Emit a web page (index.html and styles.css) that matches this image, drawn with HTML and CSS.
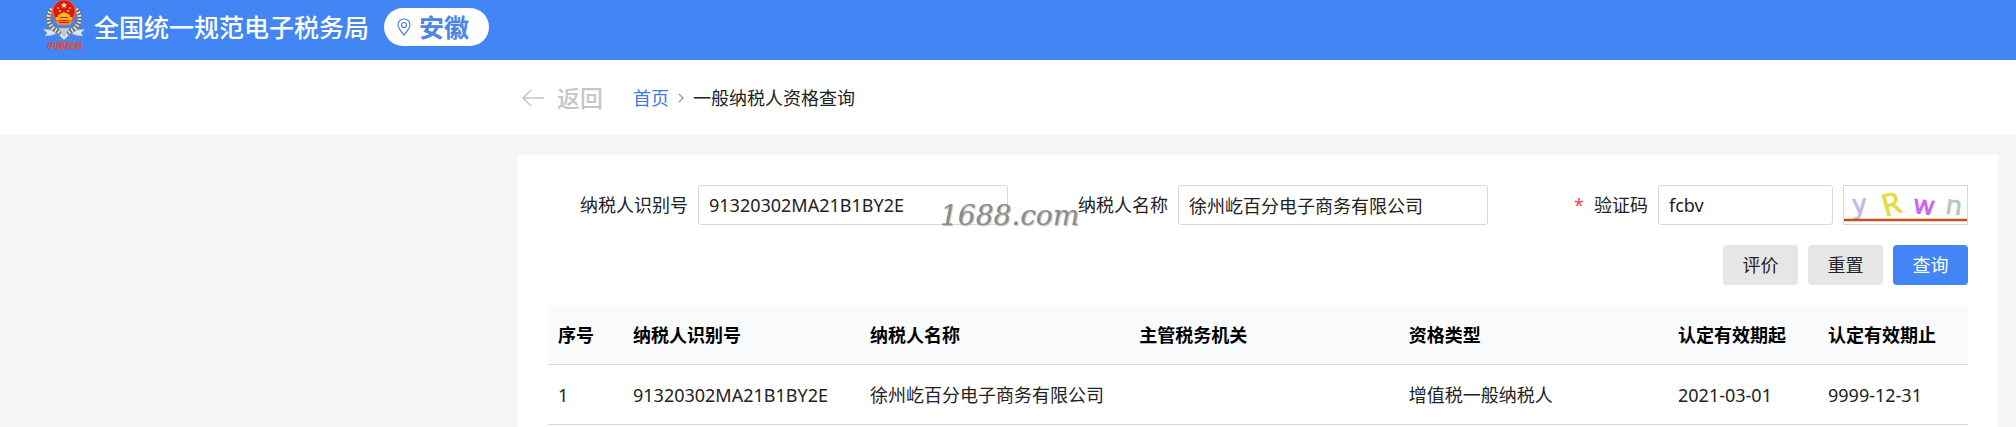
FILE: index.html
```html
<!DOCTYPE html>
<html lang="zh-CN">
<head>
<meta charset="utf-8">
<meta name="viewport" content="width=device-width, initial-scale=1">
<title>一般纳税人资格查询</title>
<link rel="stylesheet" href="styles.css">
</head>
<body>
<header class="topbar">
  <svg class="emblem" viewBox="0 0 44 54" role="img" aria-label="中国税务">
    <path d="M1 29 Q8 31 13 28 L22 34 L31 28 Q36 31 43 29 L39 33 L41 36 Q33 36 29 33 L22 40 L15 33 Q11 36 3 36 L5 33Z" fill="#dfe2e8" stroke="#9aa3b5" stroke-width=".6"/>
    <path d="M10 9 Q2 20 12 29 L19 33 M34 9 Q42 20 32 29 L25 33" fill="none" stroke="#6e7079" stroke-width="5"/>
    <path d="M10 9 Q2 20 12 29 L19 33 M34 9 Q42 20 32 29 L25 33" fill="none" stroke="#e6e3dc" stroke-width="4" stroke-dasharray="1.6 1.8"/>
    <path d="M16 28 L22 36 L28 28Z" fill="#c9ccd4" stroke="#8b909c" stroke-width=".6"/>
    <circle cx="22" cy="12" r="12" fill="#ef5a1c"/>
    <circle cx="22" cy="11" r="10.5" fill="#dd1712"/>
    <path d="M22 2 l.9 2.2 2.3.1 -1.8 1.5 .6 2.3 -2-1.3 -2 1.3 .6-2.3 -1.8-1.5 2.3-.1Z" fill="#fff0b0"/>
    <g fill="#ffd84a"><circle cx="16" cy="8" r="1"/><circle cx="28" cy="8" r="1"/><circle cx="18" cy="11" r="1"/><circle cx="26" cy="11" r="1"/></g>
    <path d="M16 15 L22 12 L28 15 V17 H30 V20 H14 V17 H16Z" fill="#f9b61f"/>
    <path d="M13 21 H31 L28 25 H16Z" fill="#f58a1b"/>
    <path d="M18 17.500 H26 M17 22.500 H27" stroke="#c91c12" stroke-width="1"/>
    <text class="emblem-name" x="4" y="49">中国税务</text>
  </svg>
  <h1 class="site-title">全国统一规范电子税务局</h1>
  <button class="region" type="button">
    <svg class="pin" viewBox="0 0 14 18" aria-hidden="true"><path d="M7 1 C3.500 1 1 3.500 1 7 C1 10 4 13.500 7 17 C10 13.500 13 10 13 7 C13 3.500 10.500 1 7 1Z"/><circle cx="7" cy="7" r="2.500"/></svg>
    <span>安徽</span>
  </button>
</header>

<nav class="crumbs" aria-label="面包屑">
  <a class="back" href="#">
    <svg class="arrow" viewBox="0 0 24 20" aria-hidden="true"><path d="M10 2 L2 10 L10 18 M2 10 H23"/></svg>
    <span>返回</span>
  </a>
  <a class="home" href="#">首页</a>
  <svg class="chevron" viewBox="0 0 6 10" aria-hidden="true"><path d="M1 1 L5 5 L1 9"/></svg>
  <span class="current">一般纳税人资格查询</span>
</nav>

<main class="panel">
  <form class="query">
    <div class="field">
      <label for="taxid">纳税人识别号</label>
      <div class="control">
        <input id="taxid" type="text" value="91320302MA21B1BY2E">
        <span class="watermark">1688.com</span>
      </div>
    </div>
    <div class="field">
      <label for="name">纳税人名称</label>
      <div class="control"><input id="name" type="text" value="徐州屹百分电子商务有限公司"></div>
    </div>
    <div class="field">
      <label for="code"><span class="required">*</span>验证码</label>
      <div class="control">
        <input id="code" type="text" value="fcbv">
        <svg class="captcha" viewBox="0 0 123 38" role="img" aria-label="验证码图片">
          <text x="9" y="27" fill="#c9b5ee" stroke="#c9b5ee" transform="rotate(-4 16 20)">y</text>
          <text class="upper" x="38" y="29" fill="#e6dc3c" stroke="#e6dc3c" transform="rotate(-16 46 18)">R</text>
          <text x="70" y="28" fill="#c965ee" stroke="#c965ee" transform="rotate(6 80 20)">w</text>
          <text x="102" y="28" fill="#b4c8bc" stroke="#b4c8bc" transform="rotate(8 108 20)">n</text>
          <path d="M0 34 H123" stroke="#c0501c" stroke-width="2.500"/>
        </svg>
      </div>
    </div>
    <div class="actions">
      <button class="btn" type="button">评价</button>
      <button class="btn" type="reset">重置</button>
      <button class="btn primary" type="button">查询</button>
    </div>
  </form>

  <table class="results">
    <colgroup><col class="c-index"><col class="c-id"><col class="c-wide"><col class="c-wide"><col class="c-wide"><col class="c-date"><col class="c-date"></colgroup>
    <thead>
      <tr><th scope="col">序号</th><th scope="col">纳税人识别号</th><th scope="col">纳税人名称</th><th scope="col">主管税务机关</th><th scope="col">资格类型</th><th scope="col">认定有效期起</th><th scope="col">认定有效期止</th></tr>
    </thead>
    <tbody>
      <tr><td>1</td><td>91320302MA21B1BY2E</td><td>徐州屹百分电子商务有限公司</td><td></td><td>增值税一般纳税人</td><td>2021-03-01</td><td>9999-12-31</td></tr>
    </tbody>
  </table>
</main>
</body>
</html>
```
FILE: styles.css
```css
* {
  box-sizing: border-box;
}

body {
  display: flex;
  flex-direction: column;
  min-height: 100vh;
  margin: 0;
  background: #f5f6f8;
  color: #222;
  font: 18px/24px "Noto Sans", "Noto Sans CJK SC", sans-serif;
}

button,
input {
  font: inherit;
  color: inherit;
}

a {
  text-decoration: none;
}

.topbar {
  display: flex;
  align-items: center;
  height: 60px;
  padding: 0 42px 6px;
  background: #4285f4;
  color: #fff;
}

.emblem {
  width: 44px;
  height: 54px;
  margin-right: 8px;
}

.emblem-name {
  fill: #e8472c;
  font: italic bold 9px "Noto Sans CJK SC", sans-serif;
}

.site-title {
  margin: 0;
  font-size: 25px;
  font-weight: 500;
}

.region {
  display: flex;
  align-items: center;
  gap: 8px;
  height: 38px;
  margin-left: 15px;
  padding: 0 20px 0 13px;
  border: 0;
  border-radius: 19px;
  background: #fff;
  color: #4a86e8;
  font-size: 25px;
  font-weight: 700;
}

.pin {
  width: 14px;
  height: 18px;
  fill: none;
  stroke: #4a7fd8;
  stroke-width: 1.2;
}

.crumbs {
  display: flex;
  align-items: center;
  height: 75px;
  padding-left: 521px;
  background: #fff;
}

.back {
  display: flex;
  align-items: center;
  gap: 12px;
  margin-right: 30px;
  color: #c6c6c6;
  font-size: 23px;
  font-weight: 500;
}

.arrow {
  width: 24px;
  height: 20px;
  fill: none;
  stroke: #c6c6c6;
  stroke-width: 1.5;
}

.home {
  color: #3f78e0;
}

.chevron {
  width: 6px;
  height: 10px;
  margin: 0 9px;
  fill: none;
  stroke: #999;
  stroke-width: 1.3;
}

.panel {
  flex: 1;
  margin: 20px 18px 0 518px;
  padding: 30px 30px 0;
  background: #fff;
}

.query {
  display: grid;
  grid-template-columns: repeat(3, 1fr);
  gap: 20px;
  margin-bottom: 20px;
}

.field {
  display: flex;
  align-items: center;
  justify-content: flex-end;
  gap: 10px;
}

.required {
  margin-right: 10px;
  color: #e04850;
}

.control {
  position: relative;
  display: flex;
  gap: 10px;
  width: 310px;
}

.control input {
  flex: 1;
  min-width: 0;
  height: 40px;
  padding: 0 10px;
  border: 1px solid #d6d8dc;
  border-radius: 3px;
  background: #fff;
}

.captcha {
  width: 125px;
  height: 40px;
  border: 1px solid #d6d8dc;
  font: 26px "Open Sans", sans-serif;
}

.captcha .upper {
  font-size: 30px;
}

.watermark {
  position: absolute;
  top: 16px;
  left: 242px;
  z-index: 1;
  color: #8c8c8c;
  font: italic 28px/30px "DejaVu Serif", serif;
  text-shadow: 1px 1px 1px #bbb;
  pointer-events: none;
}

.actions {
  grid-column: 1 / -1;
  display: flex;
  justify-content: flex-end;
  gap: 10px;
}

.btn {
  width: 75px;
  height: 40px;
  padding: 0;
  border: 0;
  border-radius: 4px;
  background: #e6e6e6;
}

.btn.primary {
  background: #4285f4;
  color: #fff;
}

.results {
  width: 100%;
  border-collapse: separate;
  border-spacing: 0;
  table-layout: fixed;
}

.c-index {
  width: 75px;
}

.c-id {
  width: 237px;
}

.c-date {
  width: 150px;
}

.results th,
.results td {
  height: 60px;
  padding: 0 10px;
  border-bottom: 1px solid #d8dade;
  text-align: left;
  white-space: nowrap;
}

.results th {
  background: #f8fafc;
  color: #000;
  font-weight: 700;
}
```
